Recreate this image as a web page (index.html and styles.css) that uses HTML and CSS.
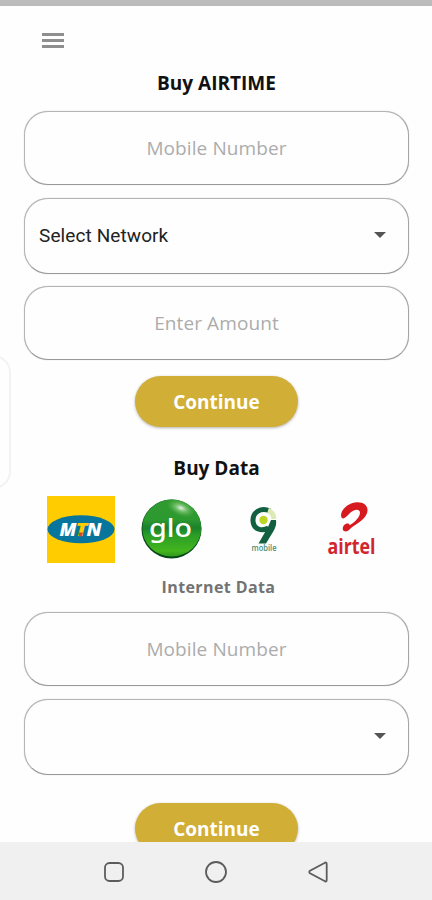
FILE: index.html
```html
<!DOCTYPE html>
<html lang="en">
<head>
    <meta charset="UTF-8">
    <meta name="viewport" content="width=device-width, initial-scale=1.0">
    <title>Buy Airtime and Data</title>
    <link rel="stylesheet" href="styles.css">
</head>
<body>
    <div class="screen">
        <div class="status-bar"></div>

        <!-- Main Content -->
        <div class="main">
            <header>
                <button class="menu-button" aria-label="Menu">
                    <span></span>
                    <span></span>
                    <span></span>
                </button>
            </header>

            <!-- Airtime Form -->
            <form class="airtime">
                <h2>Buy AIRTIME</h2>
                <input class="field" type="text" placeholder="Mobile Number">
                <div class="field select">
                    <span>Select Network</span>
                    <i class="arrow"></i>
                </div>
                <input class="field" type="text" placeholder="Enter Amount">
                <button class="continue" type="button">Continue</button>
            </form>

            <!-- Data Form -->
            <form class="data">
                <h2>Buy Data</h2>
                <div class="networks">
                    <svg viewBox="0 0 90 67" role="img" aria-label="MTN">
                        <rect x="11" y="0" width="68" height="67" fill="#fc0"/>
                        <ellipse cx="45" cy="33.3" rx="33.5" ry="14" fill="#08769c"/>
                        <g class="mtn-text">
                            <text x="23.5" y="40" fill="#fff" textLength="17" lengthAdjust="spacingAndGlyphs">M</text>
                            <text x="39.5" y="40" fill="#fc0" textLength="12" lengthAdjust="spacingAndGlyphs">T</text>
                            <text x="50.5" y="40" fill="#fff" textLength="15" lengthAdjust="spacingAndGlyphs">N</text>
                        </g>
                        <path d="M43 36.500h4l-1.500 4h-2.500z" fill="#d8432b"/>
                    </svg>

                    <svg viewBox="0 0 90 67" role="img" aria-label="glo">
                        <defs>
                            <linearGradient id="gloBall" x1="0" y1="0" x2="0" y2="1">
                                <stop offset="0" stop-color="#2f9a30"/>
                                <stop offset="0.35" stop-color="#2d9a30"/>
                                <stop offset="0.5" stop-color="#1b812b"/>
                                <stop offset="0.62" stop-color="#2a9d26"/>
                                <stop offset="0.9" stop-color="#43b51d"/>
                                <stop offset="1" stop-color="#2f9a1c"/>
                            </linearGradient>
                            <radialGradient id="gloShine">
                                <stop offset="0" stop-color="#fff" stop-opacity="0.9"/>
                                <stop offset="0.4" stop-color="#b9e3a8" stop-opacity="0.5"/>
                                <stop offset="1" stop-color="#6cc04a" stop-opacity="0"/>
                            </radialGradient>
                        </defs>
                        <ellipse cx="45.5" cy="33" rx="30" ry="29.5" fill="#07451a"/>
                        <ellipse cx="45.8" cy="32" rx="29.5" ry="28.5" fill="url(#gloBall)"/>
                        <ellipse cx="55" cy="12" rx="15" ry="8" fill="url(#gloShine)" transform="rotate(22 55 12)"/>
                        <text class="glo-text" x="23" y="40.500" textLength="43" lengthAdjust="spacingAndGlyphs">glo</text>
                    </svg>

                    <svg viewBox="0 0 90 67" role="img" aria-label="9mobile">
                        <path d="M54 15C45 11 36.500 16 37 25c.5 8 8.500 11 15.500 7" fill="none" stroke="#12603f" stroke-width="5"/>
                        <path d="M60 24c1 7-2.500 11-5.500 16L50 47.500H42.500L52 31l3-7z" fill="#12603f"/>
                        <path d="M52 14.500Q57 16 58 23" fill="none" stroke="#dcebb4" stroke-width="5"/>
                        <circle cx="47.500" cy="24" r="4.200" fill="#bdd525"/>
                        <text class="mobile-text" x="35.500" y="54.500" textLength="25" lengthAdjust="spacingAndGlyphs">mobile</text>
                    </svg>

                    <svg viewBox="0 0 90 67" role="img" aria-label="airtel">
                        <path d="M35.500 21.500C33 16 41 6.500 51 6.200C62 6 64.500 15 58 22C53.500 27 48.500 29 44.500 32.500C42 35.500 38.500 36.500 37 34C36 31 38.500 27.500 41.500 27.500C44 27.500 43 29.500 44 29C49 26 54 21 54 16.500C53.500 11.500 46.500 14 43 18C40 21 37.500 24 35.500 21.500z" fill="#d71920"/>
                        <text class="airtel-text" x="21.500" y="58.300" textLength="48" lengthAdjust="spacingAndGlyphs">airtel</text>
                    </svg>
                </div>
                <h3>Internet Data</h3>
                <input class="field" type="text" placeholder="Mobile Number">
                <div class="field select">
                    <i class="arrow"></i>
                </div>
                <button class="continue" type="button">Continue</button>
            </form>
        </div>

        <!-- Navigation Bar -->
        <nav>
            <svg viewBox="0 0 24 24"><rect x="3" y="3" width="18" height="18" rx="4.500"/></svg>
            <svg viewBox="0 0 24 24"><circle cx="12" cy="12" r="10"/></svg>
            <svg viewBox="0 0 24 24"><path d="M19 2.700Q20.700 2 20.700 4V20Q20.700 22 19 21.300L4 13.200Q2.500 12 4 10.800z"/></svg>
        </nav>

        <div class="edge-panel"></div>
    </div>
</body>
</html>
```

FILE: styles.css
```css
/* Global Styles */
* {
    box-sizing: border-box;
}

body {
    margin: 0;
    background-color: #fefefe;
    font-family: 'Open Sans', 'Noto Sans', sans-serif;
}

.screen {
    position: relative;
    display: flex;
    flex-direction: column;
    height: 900px;
    overflow: hidden;
}

.status-bar {
    flex: none;
    height: 6px;
    background-color: #bcbcbc;
}

/* Main Section */
.main {
    flex: 1;
    min-height: 0;
    overflow: hidden;
    padding: 0 23px 0 24px;
}

header {
    height: 62px;
    padding: 27px 0 0 18px;
}

.menu-button {
    display: flex;
    flex-direction: column;
    gap: 3px;
    width: 22px;
    padding: 0;
    border: none;
    background: none;
}

.menu-button span {
    height: 3px;
    background-color: #8e8e8e;
}

form {
    display: flex;
    flex-direction: column;
    align-items: center;
}

h2,
h3 {
    margin: 0;
    text-align: center;
    white-space: nowrap;
}

h2 {
    height: 30px;
    margin-bottom: 13px;
    font-size: 19px;
    line-height: 30px;
    font-weight: 700;
    color: #111111;
}

h3 {
    height: 24px;
    margin: 12px 0 13px 4px;
    font-size: 16px;
    line-height: 24px;
    font-weight: 700;
    letter-spacing: 0.4px;
    color: #737373;
}

/* Form Fields */
.field {
    width: 100%;
    height: 74px;
    padding: 0 15px 1px;
    border: 1px solid #b4b4b4;
    border-right-color: #a4a4a4;
    border-bottom-color: #989898;
    border-radius: 24px;
    background-color: #fefefe;
    box-shadow: 0 0 1px rgba(0, 0, 0, 0.3);
    font-family: inherit;
    font-size: 19px;
    letter-spacing: 0.1px;
    text-align: center;
}

.field::placeholder {
    color: #acacac;
    opacity: 1;
}

.select {
    display: flex;
    align-items: center;
    height: 76px;
    margin: 13px 0 12px;
    padding: 0 14px 2px;
    font-family: 'Roboto', sans-serif;
    letter-spacing: 0.1px;
    color: #222222;
}

.arrow {
    margin: 0 8px 0 auto;
    border: 6px solid transparent;
    border-top-color: #555555;
    border-bottom: none;
}

.continue {
    flex: none;
    width: 163px;
    height: 51px;
    margin-top: 16px;
    padding-bottom: 1px;
    border: none;
    border-radius: 26px;
    background-color: #d1ae36;
    box-shadow: 0 1px 3px rgba(0, 0, 0, 0.3);
    color: #ffffff;
    font-family: inherit;
    font-size: 19px;
    font-weight: 700;
}

.data {
    margin-top: 26px;
}

/* Network Logos */
.networks {
    display: grid;
    grid-template-columns: repeat(4, 90px);
    height: 67px;
    margin-left: -1px;
}

.networks svg {
    width: 90px;
    height: 67px;
}

.mtn-text {
    font: italic 800 18px 'Open Sans', sans-serif;
}

.glo-text {
    font: 500 25px 'Noto Sans', sans-serif;
    fill: #ffffff;
}

.mobile-text {
    font: 600 8px 'Open Sans', sans-serif;
    fill: #4d8e78;
}

.airtel-text {
    font: 700 22px 'Open Sans', sans-serif;
    fill: #d3262c;
}

/* Navigation Bar */
nav {
    flex: none;
    display: flex;
    justify-content: center;
    align-items: center;
    gap: 78px;
    height: 58px;
    padding-top: 2px;
    background-color: #f0f0f0;
}

nav svg {
    width: 24px;
    height: 24px;
    fill: none;
    stroke: #5c5c5c;
    stroke-width: 1.800;
}

/* Handle on the left edge, over the content */
.edge-panel {
    position: absolute;
    top: 355px;
    left: -24px;
    width: 35px;
    height: 134px;
    border: 2px solid #f2f2f2;
    border-radius: 20px;
}
```
